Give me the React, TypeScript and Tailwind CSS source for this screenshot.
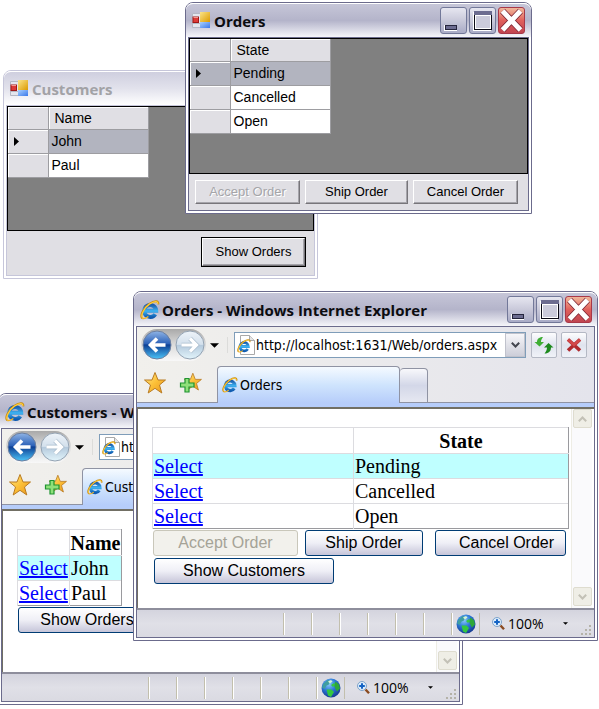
import type { ReactNode } from "react";

type TableData = { column: string; rows: string[] };

function FormLogo() {
  return (
    <svg className="size-[18px] shrink-0" viewBox="0 0 18 18" aria-hidden="true">
      <defs>
        <linearGradient id="formGold" x1="0" y1="0" x2="1" y2="1">
          <stop offset="0" stopColor="#fbe488" />
          <stop offset="1" stopColor="#dc9a00" />
        </linearGradient>
        <linearGradient id="formBlue" x1="0" y1="0" x2="1" y2="1">
          <stop offset="0" stopColor="#a8d0ff" />
          <stop offset="1" stopColor="#3a78ea" />
        </linearGradient>
      </defs>
      <path d="M.5 1.500h8v14h-8z" fill="#e4e6ee" stroke="#b4b8c4" />
      <path d="M8.500 11v4.500M1 11.500h7" stroke="#b4b8c4" />
      <rect x="8" y="0" width="10" height="10" fill="url(#formGold)" />
      <rect x="8" y="10" width="10" height="6" fill="url(#formBlue)" />
      <rect x="1" y="5" width="5.500" height="5.500" fill="#dd3b37" stroke="#a01818" />
      <path d="M1.500 5.500h4.500" stroke="#f09890" />
    </svg>
  );
}

function BrowserLogo({ className }: { className: string }) {
  return (
    <svg className={className} viewBox="0 0 20 20" aria-hidden="true">
      <defs>
        <linearGradient id="browserBlue" x1="0" y1="0" x2="0" y2="1">
          <stop offset="0" stopColor="#1c5fae" />
          <stop offset=".5" stopColor="#3fb4f2" />
          <stop offset="1" stopColor="#0f5bb0" />
        </linearGradient>
      </defs>
      <path d="M5.500 10.700H16.200A6 6 0 1 0 15.300 14.200" fill="none" stroke="url(#browserBlue)" strokeWidth="4" />
      <path d="M2.200 18.400C-.6 15.800 3.800 7.400 9.400 3.800C14.500.4 19 .2 18.300 4.400" fill="none" stroke="#c98a10" strokeWidth="1.900" />
      <path d="M2.500 17.900C.2 15.500 4.200 7.800 9.600 4.100C14.200 1 18.200.7 17.800 4" fill="none" stroke="#ffcf3e" strokeWidth="1.200" />
      <path d="M2.200 18.300c1.800.8 4-.2 6.200-1.800" fill="none" stroke="#f2b52c" strokeWidth="1.500" />
    </svg>
  );
}

function CaptionButtons() {
  const plain =
    "size-[27px] rounded-[3px] border border-[#727899] bg-linear-to-b from-[#e6e6f0] via-[#c9c9da] to-[#a9abc6]";
  return (
    <div className="flex gap-[2px]">
      <button type="button" aria-label="Minimize" className={plain}>
        <svg viewBox="0 0 25 25" className="size-[25px]">
          <rect x="3" y="17" width="13" height="6" fill="#fff" />
          <rect x="4.500" y="17.500" width="11" height="4" fill="#6c6c90" stroke="#25253d" />
        </svg>
      </button>
      <button type="button" aria-label="Maximize" className={plain}>
        <svg viewBox="0 0 25 25" className="size-[25px]">
          <rect x="3" y="4" width="18" height="19" fill="#fff" />
          <rect x="4.500" y="4.500" width="17" height="17" fill="#cbcbdb" stroke="#0c0c18" />
          <rect x="4" y="3" width="18" height="4" fill="#6c6c90" />
          <rect x="5.500" y="7.500" width="15" height="13" fill="none" stroke="#fff" />
        </svg>
      </button>
      <button
        type="button"
        aria-label="Close"
        className="size-[27px] rounded-[3px] border border-[#a83848] bg-linear-to-b from-[#efb69a] via-[#e0605c] to-[#c04450]"
      >
        <svg viewBox="0 0 25 25" className="size-[25px]">
          <path d="M3.500 3 21.500 22M21.500 3 3.500 22" stroke="#7a2433" strokeWidth="6.500" />
          <path d="M3.500 3 21.500 22M21.500 3 3.500 22" stroke="#fff" strokeWidth="5" />
        </svg>
      </button>
    </div>
  );
}

const titleFont = "font-['Open_Sans','Noto_Sans',sans-serif] text-[15px] font-bold leading-5";

function FormWindow({
  place,
  title,
  data,
  faded,
  children,
}: {
  place: string;
  title: string;
  data: TableData;
  faded?: boolean;
  children: ReactNode;
}) {
  const frame = faded ? "border-[#c6c6da]" : "border-[#6b6b8c]";
  const bar = faded
    ? "from-[#cfcfdf] via-[#e2e2ec] to-[#ffffff] text-[#a2a2a6]"
    : "from-[#c6c6d8] via-[#b4b4ca] to-[#f6f6fa] text-[#0c0c10]";
  return (
    <section className={`absolute flex flex-col rounded-t-lg border bg-white ${frame} ${place}`} aria-label={title}>
      <header className={`flex h-[34px] shrink-0 items-center gap-1 rounded-t-[7px] border-t border-white bg-linear-to-b px-[6px] ${bar}`}>
        <FormLogo />
        <h2 className={`grow ${titleFont}`}>{title}</h2>
        {!faded && <CaptionButtons />}
      </header>
      <div className={`mx-[2px] mb-[2px] flex grow flex-col border bg-[#e0dfe4] ${frame}`}>
        <div className="grow border border-black bg-[#808080]">
          <table className="table-fixed border-collapse font-['Liberation_Sans',Arial,sans-serif] text-[14px] leading-[22px] text-black">
            <thead>
              <tr className="h-[22px] bg-[#e0dfe4]">
                <th className="w-10 border-r border-b border-[#9d9da1] p-0 shadow-[inset_1px_1px_0_#fff]" />
                <th className="w-[100px] border-r border-b border-[#9d9da1] p-0 pl-[6px] text-left leading-[20px] font-normal shadow-[inset_1px_1px_0_#fff]">
                  {data.column}
                </th>
              </tr>
            </thead>
            <tbody>
              {data.rows.map((row, i) => (
                <tr key={row} className="h-[24px]">
                  <td
                    className={`border-r border-b border-[#9d9da1] p-0 shadow-[inset_1px_1px_0_#fff] ${
                      i === 0 && !faded ? "bg-[#b2b4bf]" : "bg-[#e0dfe4]"
                    }`}
                  >
                    {i === 0 && (
                      <svg className="ml-[6px] h-[9px] w-[5px]" viewBox="0 0 5 9" aria-hidden="true">
                        <path d="M0 0 5 4.500 0 9z" fill="#000" />
                      </svg>
                    )}
                  </td>
                  <td className={`border-r border-b border-[#9d9da1] p-0 pl-[3px] ${i === 0 ? "bg-[#b2b4bf]" : "bg-white"}`}>
                    {row}
                  </td>
                </tr>
              ))}
            </tbody>
          </table>
        </div>
        {children}
      </div>
    </section>
  );
}

const formButton =
  "border border-t-white border-l-white border-r-[#77757a] border-b-[#77757a] bg-[#e0dfe4] font-['Liberation_Sans',Arial,sans-serif] text-[13px] text-black shadow-[inset_-1px_-1px_0_#a5a4aa] disabled:text-[#a5a5a9] disabled:[text-shadow:1px_1px_0_#fff]";

function Star({ add }: { add?: boolean }) {
  return (
    <svg className="size-6" viewBox="0 0 24 24" aria-hidden="true">
      <defs>
        <linearGradient id="starGold" x1="0" y1="0" x2="1" y2="1">
          <stop offset="0" stopColor="#ffe98c" />
          <stop offset=".5" stopColor="#fcc037" />
          <stop offset="1" stopColor="#e8951c" />
        </linearGradient>
      </defs>
      <g transform={add ? "translate(4 1) scale(.82)" : undefined}>
        <path
          d="M12 1.500 15 9h7.500l-6 5 2.300 8L12 17.300 5.200 22l2.300-8-6-5H9z"
          fill="url(#starGold)"
          stroke="#b97b22"
          strokeLinejoin="round"
        />
      </g>
      {add && (
        <path d="M6 7.500h4v4.500h5v4h-5V21H6v-5H1.500v-4H6z" fill="#8fe07a" stroke="#1f9430" strokeWidth="1.200" />
      )}
    </svg>
  );
}

function TravelButtons() {
  return (
    <div className="flex h-8 w-[65px] shrink-0 items-center gap-[3px] rounded-full bg-linear-to-b from-[#a9a9a9] via-[#dcdcdc] to-[#f8f8f8] px-[1px]">
      <button type="button" aria-label="Back" className="size-[30px]">
        <svg viewBox="0 0 30 30">
          <defs>
            <linearGradient id="backBlue" x1="0" y1="0" x2="0" y2="1">
              <stop offset="0" stopColor="#8fb4e6" />
              <stop offset=".45" stopColor="#2d62b8" />
              <stop offset=".5" stopColor="#0d3f94" />
              <stop offset="1" stopColor="#4cc4f8" />
            </linearGradient>
          </defs>
          <circle cx="15" cy="15" r="14" fill="url(#backBlue)" stroke="#6c7f9f" />
          <path d="M23.500 15H9M15 8.500 8.500 15l6.500 6.500" fill="none" stroke="#fff" strokeWidth="3.600" />
        </svg>
      </button>
      <button type="button" aria-label="Forward" className="size-[30px]">
        <svg viewBox="0 0 30 30">
          <defs>
            <linearGradient id="forwardPale" x1="0" y1="0" x2="0" y2="1">
              <stop offset="0" stopColor="#eef4f9" />
              <stop offset=".48" stopColor="#d3e0ec" />
              <stop offset=".5" stopColor="#b4c9dc" />
              <stop offset="1" stopColor="#e2f4fb" />
            </linearGradient>
          </defs>
          <circle cx="15" cy="15" r="14" fill="url(#forwardPale)" stroke="#94a3b3" />
          <path d="M6.500 15h14M15 8.500l6.500 6.500-6.500 6.500" fill="none" stroke="#a9bccd" strokeWidth="4.600" />
          <path d="M6.500 15h14M15 8.500l6.500 6.500-6.500 6.500" fill="none" stroke="#fff" strokeWidth="3.200" />
        </svg>
      </button>
    </div>
  );
}

function Caret({ className }: { className: string }) {
  return (
    <svg className={className} viewBox="0 0 10 5" aria-hidden="true">
      <path d="M0 0h10L5 5z" fill="#000" />
    </svg>
  );
}

function ScrollArrow({ label, flip }: { label: string; flip?: boolean }) {
  return (
    <button
      type="button"
      aria-label={label}
      className="flex size-[19px] items-center justify-center rounded-[2px] border border-[#dedccf] bg-[#efeee6]"
    >
      <svg className={`h-[6px] w-[9px] ${flip ? "rotate-180" : ""}`} viewBox="0 0 9 6" aria-hidden="true">
        <path d="M.8 5.200 4.500 1.500l3.700 3.700" fill="none" stroke="#c3c1b6" strokeWidth="2" />
      </svg>
    </button>
  );
}

function StatusBar() {
  return (
    <footer className="flex h-[29px] shrink-0 items-center justify-end border-t-2 border-[#8e8e9c] bg-linear-to-b from-[#d4d4de] via-[#e0e0e7] to-[#dadae2] font-['Open_Sans','Noto_Sans',sans-serif] text-[14px] text-black">
      {[0, 1, 2, 3, 4, 5].map((n) => (
        <span key={n} className="h-[22px] w-7 border-l border-[#c2bfad] shadow-[inset_1px_0_0_#fff]" />
      ))}
      <span className="flex h-[22px] w-[29px] items-center justify-center border-x border-[#c2bfad] shadow-[inset_1px_0_0_#fff]">
        <svg className="size-5 shrink-0" viewBox="0 0 20 20" aria-hidden="true">
          <defs>
            <radialGradient id="globe" cx=".4" cy=".3" r=".7">
              <stop offset="0" stopColor="#8ccbfa" />
              <stop offset=".5" stopColor="#2c79d8" />
              <stop offset="1" stopColor="#173c93" />
            </radialGradient>
          </defs>
          <circle cx="10" cy="10" r="9.500" fill="url(#globe)" />
          <path d="M2.500 5.500 7 1.800l2 1.700-1 3-2.500 1-2 3.500L1 9.500z" fill="#3f9ea0" />
          <path d="M14.500 3.500 18 6.500l1 4-3 3-2-3.500-1-3z" fill="#2fa838" />
          <path d="M5.500 11.500h5l2.500 2.500-3 5-3-1.500z" fill="#35c840" />
          <path d="M10 7l3-2 1 2-2 2z" fill="#35c840" />
          <path d="M7 3.500l3-1.500 1.500 1.500-2.500 2z" fill="#d6f4d4" />
        </svg>
      </span>
      <button type="button" className="ml-3 flex w-[76px] items-center gap-[3px]">
        <svg className="size-[13px]" viewBox="0 0 13 13" aria-hidden="true">
          <path d="M8.500 8.500 12 12.200" stroke="#8a4a20" strokeWidth="2.400" />
          <circle cx="5" cy="5" r="4.500" fill="#dcecfb" stroke="#7fa3c8" />
          <path d="M5 2.200v5.600M2.200 5h5.600" stroke="#1463c4" strokeWidth="2" />
        </svg>
        <span className="grow text-left">100%</span>
        <Caret className="h-[3px] w-[5px]" />
      </button>
      <svg className="mt-3 mr-[2px] ml-3 size-3" viewBox="0 0 12 12" aria-hidden="true">
        <path d="M9 1h2v2H9zM5 5h2v2H5zM9 5h2v2H9zM1 9h2v2H1zM5 9h2v2H5zM9 9h2v2H9z" fill="#b4b2a8" />
      </svg>
    </footer>
  );
}

const toolButton =
  "flex size-[26px] shrink-0 items-center justify-center rounded-[2px] border border-[#b4b8c4] bg-linear-to-b from-[#fdfdfe] via-[#dfe3ee] to-[#f0f2f8]";

function BrowserWindow({
  place,
  title,
  url,
  data,
  firstCol,
  lastCol,
  children,
}: {
  place: string;
  title: string;
  url: string;
  data: TableData;
  firstCol: string;
  lastCol: string;
  children: ReactNode;
}) {
  return (
    <section
      className={`absolute flex w-[465px] flex-col rounded-t-lg border border-[#6b6b8c] bg-white ${place}`}
      aria-label={title}
    >
      <header className="flex h-[34px] shrink-0 items-center gap-[2px] rounded-t-[7px] border-t border-white bg-linear-to-b from-[#c6c6d8] via-[#b4b4ca] to-[#f6f6fa] pr-[5px] pl-[6px] text-[#0c0c10]">
        <BrowserLogo className="size-5" />
        <h2 className={`grow whitespace-nowrap ${titleFont}`}>{`${title} - Windows Internet Explorer`}</h2>
        <CaptionButtons />
      </header>
      <div className="mx-[2px] mb-[2px] flex grow flex-col border border-[#6b6b8c]">
        <div className="bg-linear-to-r from-[#f1f0ec] to-[#e4e4ec]">
          <div className="flex h-9 items-center pr-[7px] pl-[4px]">
            <TravelButtons />
            <button type="button" aria-label="Recent pages" className="ml-[4px] flex w-[9px] shrink-0">
              <Caret className="h-[5px] w-[9px]" />
            </button>
            <span className="ml-2 h-4 border-l border-[#dcdcda]" />
            <div className="ml-[6px] flex h-[26px] min-w-0 grow items-center border border-[#7f9db9] bg-white pl-[2px]">
              <span className="relative flex h-5 w-[18px] shrink-0 items-center">
                <svg className="h-5 w-[18px]" viewBox="0 0 18 20" aria-hidden="true">
                  <path d="M3.500.5h9l5 5v14h-14z" fill="#fff" stroke="#a9a9a9" />
                  <path d="M12.500.5v5h5" fill="#e4e4e4" stroke="#a9a9a9" />
                </svg>
                <BrowserLogo className="absolute top-[4px] left-0 size-[14px]" />
              </span>
              <input
                type="text"
                aria-label="Address"
                defaultValue={url}
                className="h-6 min-w-0 grow bg-transparent pl-[1px] font-['DejaVu_Sans_Condensed','Open_Sans',sans-serif] text-[14px] leading-5 text-black outline-none"
              />
              <button
                type="button"
                aria-label="Show address list"
                className="flex h-6 w-5 shrink-0 items-center justify-center border border-[#c0c2cc] bg-linear-to-b from-[#f6f6f9] to-[#cdced9]"
              >
                <svg className="h-[6px] w-[9px]" viewBox="0 0 9 6" aria-hidden="true">
                  <path d="M.8.8 4.500 4.500 8.200.8" fill="none" stroke="#43464e" strokeWidth="2" />
                </svg>
              </button>
            </div>
            <button type="button" aria-label="Refresh" className={`ml-[5px] ${toolButton}`}>
              <svg className="size-5" viewBox="0 0 20 20" aria-hidden="true">
                <path d="M9 2C4.500 2 3 4.500 3 7H.5l5 4.500L10 7H7c0-1.500.5-3 2-5z" fill="#3fae35" />
                <path d="M10.500 18.500c4.500 0 6.500-2.500 6.500-6h2.500l-5-4.500-4.500 4.500h3c0 2-.8 4-2.500 6z" fill="#1e8a1e" />
              </svg>
            </button>
            <button type="button" aria-label="Stop" className={`ml-1 ${toolButton}`}>
              <svg className="size-4" viewBox="0 0 16 16" aria-hidden="true">
                <path d="M2 2.500 14 13.500M14 2.500 2 13.500" stroke="#b02a2e" strokeWidth="3.600" />
                <path d="M2 2.500 8 8l6-5.500" fill="none" stroke="#d3484a" strokeWidth="2.400" />
              </svg>
            </button>
          </div>
          <div className="flex h-10 items-end">
            <div className="flex h-10 w-20 shrink-0 items-center gap-3 border-b border-[#8f93a3] pl-[6px]">
              <button type="button" aria-label="Favorites Center">
                <Star />
              </button>
              <button type="button" aria-label="Add to Favorites">
                <Star add />
              </button>
            </div>
            <button
              type="button"
              className="flex h-[37px] w-[183px] items-center gap-[2px] rounded-t-[4px] border border-b-0 border-[#8f93a3] bg-linear-to-b from-[#f5faff] via-[#cfe4fd] to-[#b6cdfa] pl-[4px] font-['DejaVu_Sans_Condensed','Open_Sans',sans-serif] text-[14px] text-black"
            >
              <BrowserLogo className="size-4" />
              {title}
            </button>
            <button
              type="button"
              aria-label="New tab"
              className="h-[35px] w-7 rounded-t-[4px] border border-l-0 border-[#8f93a3] bg-linear-to-b from-[#f8f8fb] via-[#d3d7e8] to-[#e6e8f1]"
            />
            <span className="grow border-b border-[#8f93a3]" />
          </div>
        </div>
        <div className="h-1 shrink-0 bg-[#b6cdfa]" />
        <div className="flex grow border-t-2 border-l border-[#716f64] bg-white">
          <main className="grow pt-[18px] pl-[14px]">
            <table className="table-fixed border-collapse border-r border-b border-[#9a9a9e] font-['Liberation_Serif','Times_New_Roman',serif] text-[20px] leading-6 text-black">
              <thead>
                <tr className="h-[26px]">
                  <th className={`border border-[#dcdce0] p-0 ${firstCol}`} />
                  <th className={`border border-r-[#9a9a9e] border-[#dcdce0] p-0 font-bold ${lastCol}`}>{data.column}</th>
                </tr>
              </thead>
              <tbody>
                {data.rows.map((row, i) => (
                  <tr key={row} className={`h-[25px] last:border-b last:border-[#9a9a9e] ${i === 0 ? "bg-[#bfffff]" : ""}`}>
                    <td className="border-x border-t border-[#dcdce0] p-0 pl-[1px]">
                      <a href="#select" className="text-[#0000ff] underline">
                        Select
                      </a>
                    </td>
                    <td className="border-x border-t border-r-[#9a9a9e] border-[#dcdce0] p-0 pl-[1px]">{row}</td>
                  </tr>
                ))}
              </tbody>
            </table>
            {children}
          </main>
          <div className="mr-[2px] flex w-[21px] shrink-0 flex-col items-center justify-between border-l border-[#eeede5] bg-[#fafafc] pb-[2px]">
            <ScrollArrow label="Scroll up" />
            <ScrollArrow label="Scroll down" flip />
          </div>
        </div>
        <StatusBar />
      </div>
    </section>
  );
}

const webButton =
  "h-[26px] rounded-[3px] border border-[#003c74] bg-linear-to-b from-white via-[#efeff6] to-[#c6c5d9] font-['Liberation_Sans',Arial,sans-serif] text-[16px] leading-5 text-black whitespace-nowrap disabled:border-[#c9c7ba] disabled:bg-none disabled:bg-[#f2f1ec] disabled:text-[#a5a397]";

export default function App() {
  return (
    <div className="relative min-h-screen overflow-hidden bg-white">
      <FormWindow
        place="left-[3px] top-[70px] w-[315px] h-[209px]"
        title="Customers"
        data={{ column: "Name", rows: ["John", "Paul"] }}
        faded
      >
        <div className="flex h-11 justify-end pt-[7px] pr-[9px]">
          <button type="button" className={`h-7 w-[103px] outline outline-black ${formButton}`}>
            Show Orders
          </button>
        </div>
      </FormWindow>

      <FormWindow
        place="left-[185px] top-[2px] w-[347px] h-[212px]"
        title="Orders"
        data={{ column: "State", rows: ["Pending", "Cancelled", "Open"] }}
      >
        <div className="flex h-9 gap-[5px] pt-[6px] pl-[6px]">
          <button type="button" disabled className={`h-6 w-[105px] ${formButton}`}>
            Accept Order
          </button>
          <button type="button" className={`h-6 w-[103px] ${formButton}`}>
            Ship Order
          </button>
          <button type="button" className={`h-6 w-[105px] ${formButton}`}>
            Cancel Order
          </button>
        </div>
      </FormWindow>

      <BrowserWindow
        place="-left-[2px] top-[393px] h-[312px]"
        title="Customers"
        url="http://localhost:1631/Web/"
        data={{ column: "Name", rows: ["John", "Paul"] }}
        firstCol="w-[52px]"
        lastCol="w-[52px]"
      >
        <button type="button" className={`mt-[1px] ml-[1px] w-[138px] ${webButton}`}>
          Show Orders
        </button>
      </BrowserWindow>

      <BrowserWindow
        place="left-[133px] top-[291px] h-[350px]"
        title="Orders"
        url="http://localhost:1631/Web/orders.aspx"
        data={{ column: "State", rows: ["Pending", "Cancelled", "Open"] }}
        firstCol="w-[201px]"
        lastCol="w-[215px]"
      >
        <div className="mt-[1px] ml-[1px] flex">
          <button type="button" disabled className={`w-[145px] ${webButton}`}>
            Accept Order
          </button>
          <button type="button" className={`ml-[7px] w-[118px] ${webButton}`}>
            Ship Order
          </button>
          <button type="button" className={`ml-3 w-[131px] pl-3 ${webButton}`}>
            Cancel Order
          </button>
        </div>
        <button type="button" className={`mt-[2px] ml-[2px] w-[180px] ${webButton}`}>
          Show Customers
        </button>
      </BrowserWindow>
    </div>
  );
}
